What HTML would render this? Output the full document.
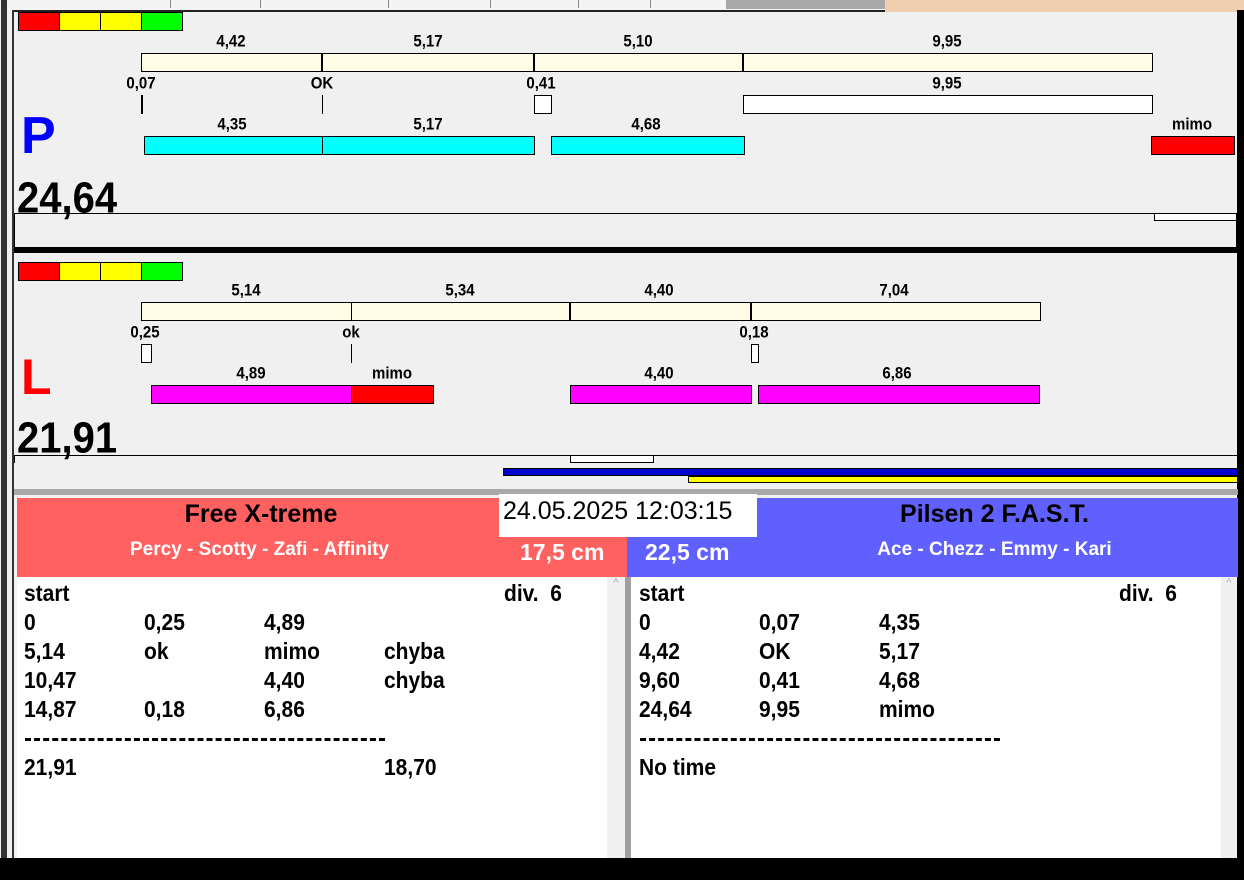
<!DOCTYPE html>
<html><head><meta charset="utf-8"><style>
*{margin:0;padding:0;box-sizing:border-box}
body{width:1244px;height:880px;background:#f0f0f0;position:relative;overflow:hidden;font-family:"Liberation Sans",Arial,sans-serif;font-weight:bold}
div{position:absolute}
.b{border:1px solid #000}
.y{background:#fffde6}
.c{background:#00ffff}
.m{background:#ff00ff}
.r{background:#ff0000}
.w{background:#fff}
.g{background:#00ff00}
.yy{background:#ffff00}
.l{font-size:15px;transform:translateX(-50%) scaleY(1.1);white-space:nowrap;color:#000}
.t{font-size:21px;color:#000;white-space:nowrap;transform:scaleY(1.12);transform-origin:0 0}
</style></head><body>
<div style="left:0;top:0;width:885px;height:10px;background:#f4f4f4"></div>
<div style="left:726px;top:0;width:159px;height:9px;background:#a8a8a8"></div>
<div style="left:885px;top:0;width:359px;height:12px;background:#f0ceb0"></div>
<div style="left:13px;top:10px;width:872px;height:2px;background:#222"></div>
<div style="left:170px;top:0;width:1px;height:8px;background:#888"></div>
<div style="left:260px;top:0;width:1px;height:8px;background:#888"></div>
<div style="left:388px;top:0;width:1px;height:8px;background:#888"></div>
<div style="left:490px;top:0;width:1px;height:8px;background:#888"></div>
<div style="left:578px;top:0;width:1px;height:8px;background:#888"></div>
<div style="left:650px;top:0;width:1px;height:8px;background:#888"></div>
<div style="left:1px;top:0;width:6px;height:880px;background:#333"></div>
<div style="left:12px;top:10px;width:2px;height:850px;background:#333"></div>
<div style="left:1237px;top:10px;width:7px;height:870px;background:#000"></div>

<div class="b r" style="left:18px;top:12px;width:42px;height:19px"></div>
<div class="b yy" style="left:59px;top:12px;width:42px;height:19px"></div>
<div class="b yy" style="left:100px;top:12px;width:42px;height:19px"></div>
<div class="b g" style="left:141px;top:12px;width:42px;height:19px"></div>

<div class="l" style="left:231px;top:33px">4,42</div>
<div class="l" style="left:428px;top:33px">5,17</div>
<div class="l" style="left:638px;top:33px">5,10</div>
<div class="l" style="left:947px;top:33px">9,95</div>
<div class="b y" style="left:141px;top:53px;width:1012px;height:19px"></div>
<div style="left:321px;top:53px;width:2px;height:19px;background:#000"></div>
<div style="left:533px;top:53px;width:2px;height:19px;background:#000"></div>
<div style="left:742px;top:53px;width:2px;height:19px;background:#000"></div>

<div class="l" style="left:141px;top:75px">0,07</div>
<div class="l" style="left:322px;top:75px">OK</div>
<div class="l" style="left:541px;top:75px">0,41</div>
<div class="l" style="left:947px;top:75px">9,95</div>
<div style="left:141px;top:95px;width:2px;height:19px;background:#000"></div>
<div style="left:322px;top:95px;width:1px;height:19px;background:#000"></div>
<div class="b w" style="left:534px;top:95px;width:18px;height:19px"></div>
<div class="b w" style="left:743px;top:95px;width:410px;height:19px"></div>

<div style="left:21px;top:106px;font-size:52px;color:#0000ff">P</div>
<div class="l" style="left:232px;top:116px">4,35</div>
<div class="l" style="left:428px;top:116px">5,17</div>
<div class="l" style="left:646px;top:116px">4,68</div>
<div class="l" style="left:1192px;top:116px">mimo</div>
<div class="b c" style="left:144px;top:136px;width:179px;height:19px"></div>
<div class="b c" style="left:322px;top:136px;width:213px;height:19px"></div>
<div class="b c" style="left:551px;top:136px;width:194px;height:19px"></div>
<div class="b r" style="left:1151px;top:136px;width:84px;height:19px"></div>

<div style="left:17px;top:174px;font-size:40px;color:#000;transform:scaleY(1.1);transform-origin:0 0">24,64</div>
<div style="left:14px;top:213px;width:1224px;height:1px;background:#000"></div>
<div style="left:14px;top:213px;width:1px;height:34px;background:#000"></div>
<div style="left:1236px;top:213px;width:1px;height:34px;background:#000"></div>
<div class="b w" style="left:1154px;top:213px;width:83px;height:8px"></div>
<div style="left:14px;top:247px;width:1224px;height:6px;background:#000"></div>

<div class="b r" style="left:18px;top:262px;width:42px;height:19px"></div>
<div class="b yy" style="left:59px;top:262px;width:42px;height:19px"></div>
<div class="b yy" style="left:100px;top:262px;width:42px;height:19px"></div>
<div class="b g" style="left:141px;top:262px;width:42px;height:19px"></div>

<div class="l" style="left:246px;top:282px">5,14</div>
<div class="l" style="left:460px;top:282px">5,34</div>
<div class="l" style="left:659px;top:282px">4,40</div>
<div class="l" style="left:894px;top:282px">7,04</div>
<div class="b y" style="left:141px;top:302px;width:900px;height:19px"></div>
<div style="left:351px;top:302px;width:1px;height:19px;background:#000"></div>
<div style="left:569px;top:302px;width:2px;height:19px;background:#000"></div>
<div style="left:750px;top:302px;width:2px;height:19px;background:#000"></div>

<div class="l" style="left:145px;top:324px">0,25</div>
<div class="l" style="left:351px;top:324px">ok</div>
<div class="l" style="left:754px;top:324px">0,18</div>
<div class="b w" style="left:141px;top:344px;width:11px;height:19px"></div>
<div style="left:351px;top:344px;width:1px;height:19px;background:#000"></div>
<div class="b w" style="left:751px;top:344px;width:8px;height:19px"></div>

<div style="left:21px;top:348px;font-size:50px;color:#ff0000">L</div>
<div class="l" style="left:251px;top:365px">4,89</div>
<div class="l" style="left:392px;top:365px">mimo</div>
<div class="l" style="left:659px;top:365px">4,40</div>
<div class="l" style="left:897px;top:365px">6,86</div>
<div class="b m" style="left:151px;top:385px;width:201px;height:19px"></div>
<div class="b r" style="left:351px;top:385px;width:83px;height:19px"></div>
<div class="b m" style="left:570px;top:385px;width:182px;height:19px"></div>
<div class="b m" style="left:758px;top:385px;width:282px;height:19px"></div>

<div style="left:17px;top:414px;font-size:40px;color:#000;transform:scaleY(1.1);transform-origin:0 0">21,91</div>
<div style="left:14px;top:455px;width:1224px;height:1px;background:#000"></div>
<div style="left:14px;top:455px;width:1px;height:8px;background:#000"></div>
<div class="b w" style="left:570px;top:455px;width:84px;height:8px"></div>
<div style="left:503px;top:468px;width:735px;height:8px;background:#0000cc;border:1px solid #000"></div>
<div style="left:688px;top:476px;width:550px;height:7px;background:#ffff00;border:1px solid #000"></div>

<div style="left:14px;top:489px;width:1224px;height:6px;background:#a8a8a8"></div>
<div style="left:14px;top:495px;width:3px;height:365px;background:#f0f0f0"></div>
<div style="left:17px;top:498px;width:610px;height:79px;background:#ff6060"></div>
<div style="left:627px;top:498px;width:611px;height:79px;background:#6060ff"></div>
<div style="left:17px;top:500px;width:488px;text-align:center;font-size:25px;color:#000">Free X-treme</div>
<div style="left:17px;top:539px;width:485px;text-align:center;font-size:19px;color:#fff">Percy - Scotty - Zafi - Affinity</div>
<div style="left:520px;top:539px;font-size:23px;color:#fff">17,5 cm</div>
<div style="left:645px;top:539px;font-size:23px;color:#fff">22,5 cm</div>
<div style="left:757px;top:500px;width:475px;text-align:center;font-size:25px;color:#000">Pilsen 2 F.A.S.T.</div>
<div style="left:757px;top:539px;width:475px;text-align:center;font-size:19px;color:#fff">Ace - Chezz - Emmy - Kari</div>
<div style="left:499px;top:494px;width:258px;height:43px;background:#fff;font-weight:normal;font-size:25px;color:#000;padding:3px 0 0 4px;white-space:nowrap">24.05.2025 12:03:15</div>

<div style="left:17px;top:577px;width:590px;height:283px;background:#fff"></div>
<div style="left:607px;top:577px;width:18px;height:283px;background:#f0f0f0;color:#aaa;font-size:11px;text-align:center;font-weight:normal">^</div>
<div style="left:625px;top:577px;width:6px;height:283px;background:#a0a0a0"></div>
<div style="left:631px;top:577px;width:590px;height:283px;background:#fff"></div>
<div style="left:1221px;top:577px;width:16px;height:283px;background:#f0f0f0;color:#aaa;font-size:11px;text-align:center;font-weight:normal">^</div>

<div class="t" style="left:24px;top:581px">start</div><div class="t" style="left:504px;top:581px">div.&nbsp; 6</div>
<div class="t" style="left:24px;top:610px">0</div><div class="t" style="left:144px;top:610px">0,25</div><div class="t" style="left:264px;top:610px">4,89</div>
<div class="t" style="left:24px;top:639px">5,14</div><div class="t" style="left:144px;top:639px">ok</div><div class="t" style="left:264px;top:639px">mimo</div><div class="t" style="left:384px;top:639px">chyba</div>
<div class="t" style="left:24px;top:668px">10,47</div><div class="t" style="left:264px;top:668px">4,40</div><div class="t" style="left:384px;top:668px">chyba</div>
<div class="t" style="left:24px;top:697px">14,87</div><div class="t" style="left:144px;top:697px">0,18</div><div class="t" style="left:264px;top:697px">6,86</div>
<div style="left:25px;top:738px;width:360px;height:0;border-top:3px dashed #000"></div>
<div class="t" style="left:24px;top:755px">21,91</div><div class="t" style="left:384px;top:755px">18,70</div>

<div class="t" style="left:639px;top:581px">start</div><div class="t" style="left:1119px;top:581px">div.&nbsp; 6</div>
<div class="t" style="left:639px;top:610px">0</div><div class="t" style="left:759px;top:610px">0,07</div><div class="t" style="left:879px;top:610px">4,35</div>
<div class="t" style="left:639px;top:639px">4,42</div><div class="t" style="left:759px;top:639px">OK</div><div class="t" style="left:879px;top:639px">5,17</div>
<div class="t" style="left:639px;top:668px">9,60</div><div class="t" style="left:759px;top:668px">0,41</div><div class="t" style="left:879px;top:668px">4,68</div>
<div class="t" style="left:639px;top:697px">24,64</div><div class="t" style="left:759px;top:697px">9,95</div><div class="t" style="left:879px;top:697px">mimo</div>
<div style="left:640px;top:738px;width:360px;height:0;border-top:3px dashed #000"></div>
<div class="t" style="left:639px;top:755px">No time</div>

<div style="left:0;top:858px;width:1244px;height:22px;background:#000"></div>
</body></html>
